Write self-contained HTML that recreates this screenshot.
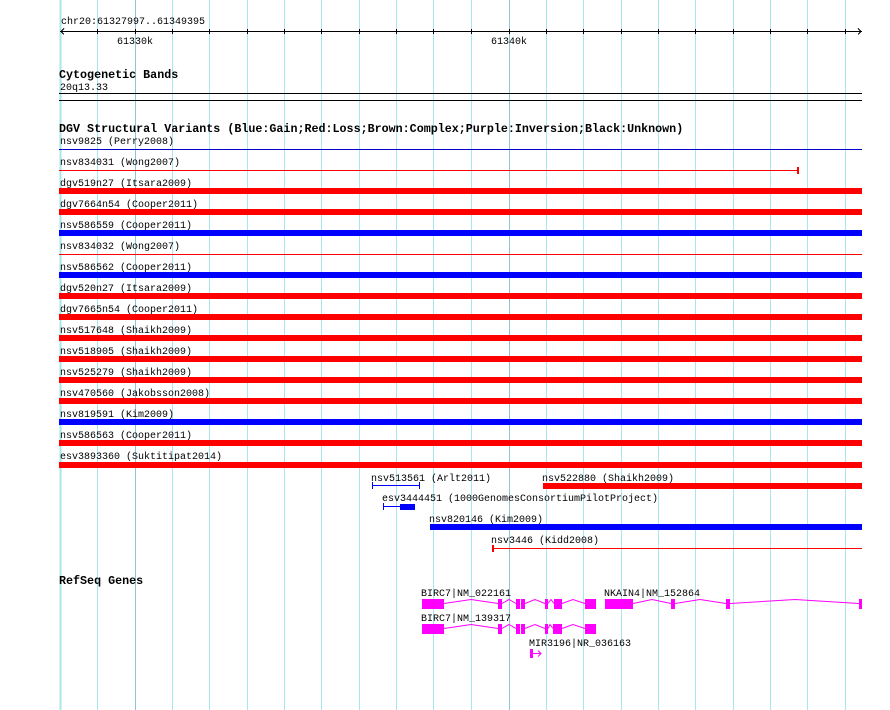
<!DOCTYPE html>
<html><head><meta charset="utf-8"><style>
html,body{margin:0;padding:0;background:#fff}
svg{display:block}
text{font-family:"Liberation Mono",monospace;font-size:10px;fill:#000}
.b{font-weight:bold;font-size:11.7px}
</style></head><body>
<svg width="890" height="710" viewBox="0 0 890 710" xmlns="http://www.w3.org/2000/svg" shape-rendering="crispEdges">
<g stroke="#a8e6ee" stroke-width="1">
<line x1="60.5" y1="0" x2="60.5" y2="710" stroke-width="2"/>
<line x1="97.5" y1="0" x2="97.5" y2="710"/>
<line x1="135.5" y1="0" x2="135.5" y2="710" stroke="#8cc4dc"/>
<line x1="172.5" y1="0" x2="172.5" y2="710"/>
<line x1="209.5" y1="0" x2="209.5" y2="710"/>
<line x1="247.5" y1="0" x2="247.5" y2="710"/>
<line x1="284.5" y1="0" x2="284.5" y2="710"/>
<line x1="321.5" y1="0" x2="321.5" y2="710"/>
<line x1="359.5" y1="0" x2="359.5" y2="710"/>
<line x1="396.5" y1="0" x2="396.5" y2="710"/>
<line x1="433.5" y1="0" x2="433.5" y2="710"/>
<line x1="471.5" y1="0" x2="471.5" y2="710"/>
<line x1="509.5" y1="0" x2="509.5" y2="710" stroke="#8cc4dc"/>
<line x1="546.5" y1="0" x2="546.5" y2="710"/>
<line x1="583.5" y1="0" x2="583.5" y2="710"/>
<line x1="621.5" y1="0" x2="621.5" y2="710"/>
<line x1="658.5" y1="0" x2="658.5" y2="710"/>
<line x1="695.5" y1="0" x2="695.5" y2="710"/>
<line x1="733.5" y1="0" x2="733.5" y2="710"/>
<line x1="770.5" y1="0" x2="770.5" y2="710"/>
<line x1="807.5" y1="0" x2="807.5" y2="710"/>
<line x1="845.5" y1="0" x2="845.5" y2="710"/>
</g>
<!-- ruler -->
<text x="61" y="24">chr20:61327997..61349395</text>
<g stroke="#000" stroke-width="1">
<line x1="60" y1="31.5" x2="862" y2="31.5"/>
<path d="M64 28.5 L61 31.5 L64 34.5 M858 28.5 L861 31.5 L858 34.5" fill="none"/>
<g>
<line x1="97.5" y1="29" x2="97.5" y2="34"/><line x1="135.5" y1="29" x2="135.5" y2="34"/><line x1="172.5" y1="29" x2="172.5" y2="34"/><line x1="209.5" y1="29" x2="209.5" y2="34"/><line x1="247.5" y1="29" x2="247.5" y2="34"/><line x1="284.5" y1="29" x2="284.5" y2="34"/><line x1="321.5" y1="29" x2="321.5" y2="34"/><line x1="359.5" y1="29" x2="359.5" y2="34"/><line x1="396.5" y1="29" x2="396.5" y2="34"/><line x1="433.5" y1="29" x2="433.5" y2="34"/><line x1="471.5" y1="29" x2="471.5" y2="34"/><line x1="509.5" y1="29" x2="509.5" y2="34"/><line x1="546.5" y1="29" x2="546.5" y2="34"/><line x1="583.5" y1="29" x2="583.5" y2="34"/><line x1="621.5" y1="29" x2="621.5" y2="34"/><line x1="658.5" y1="29" x2="658.5" y2="34"/><line x1="695.5" y1="29" x2="695.5" y2="34"/><line x1="733.5" y1="29" x2="733.5" y2="34"/><line x1="770.5" y1="29" x2="770.5" y2="34"/><line x1="807.5" y1="29" x2="807.5" y2="34"/><line x1="845.5" y1="29" x2="845.5" y2="34"/>
</g>
</g>
<text x="117" y="44">61330k</text>
<text x="491" y="44">61340k</text>
<!-- cytoband -->
<text class="b" x="59" y="78">Cytogenetic Bands</text>
<text x="60" y="90">20q13.33</text>
<rect x="59" y="93" width="803" height="1" fill="#000"/>
<rect x="59" y="100" width="803" height="1" fill="#000"/>
<!-- DGV -->
<text class="b" x="59" y="132">DGV Structural Variants (Blue:Gain;Red:Loss;Brown:Complex;Purple:Inversion;Black:Unknown)</text>
<text x="60" y="144">nsv9825 (Perry2008)</text>
<rect x="59" y="149" width="803" height="1" fill="#0000cc"/>
<text x="60" y="165">nsv834031 (Wong2007)</text>
<rect x="59" y="170" width="739" height="1" fill="#f00"/><rect x="797" y="167" width="2" height="7" fill="#f00"/>
<text x="60" y="186">dgv519n27 (Itsara2009)</text>
<rect x="59" y="188" width="803" height="6" fill="#f00"/>
<text x="60" y="207">dgv7664n54 (Cooper2011)</text>
<rect x="59" y="209" width="803" height="6" fill="#f00"/>
<text x="60" y="228">nsv586559 (Cooper2011)</text>
<rect x="59" y="230" width="803" height="6" fill="#0000ff"/>
<text x="60" y="249">nsv834032 (Wong2007)</text>
<rect x="59" y="254" width="803" height="1" fill="#f00"/>
<text x="60" y="270">nsv586562 (Cooper2011)</text>
<rect x="59" y="272" width="803" height="6" fill="#0000ff"/>
<text x="60" y="291">dgv520n27 (Itsara2009)</text>
<rect x="59" y="293" width="803" height="6" fill="#f00"/>
<text x="60" y="312">dgv7665n54 (Cooper2011)</text>
<rect x="59" y="314" width="803" height="6" fill="#f00"/>
<text x="60" y="333">nsv517648 (Shaikh2009)</text>
<rect x="59" y="335" width="803" height="6" fill="#f00"/>
<text x="60" y="354">nsv518905 (Shaikh2009)</text>
<rect x="59" y="356" width="803" height="6" fill="#f00"/>
<text x="60" y="375">nsv525279 (Shaikh2009)</text>
<rect x="59" y="377" width="803" height="6" fill="#f00"/>
<text x="60" y="396">nsv470560 (Jakobsson2008)</text>
<rect x="59" y="398" width="803" height="6" fill="#f00"/>
<text x="60" y="417">nsv819591 (Kim2009)</text>
<rect x="59" y="419" width="803" height="6" fill="#0000ff"/>
<text x="60" y="438">nsv586563 (Cooper2011)</text>
<rect x="59" y="440" width="803" height="6" fill="#f00"/>
<text x="60" y="459">esv3893360 (Suktitipat2014)</text>
<rect x="59" y="462" width="803" height="6" fill="#f00"/>
<text x="371" y="481">nsv513561 (Arlt2011)</text>
<rect x="372" y="485" width="48" height="1" fill="#0000ff"/><rect x="372" y="482" width="1" height="7" fill="#0000ff"/><rect x="419" y="482" width="1" height="7" fill="#0000ff"/>
<text x="542" y="481">nsv522880 (Shaikh2009)</text>
<rect x="543" y="483" width="319" height="6" fill="#f00"/>
<text x="382" y="501">esv3444451 (1000GenomesConsortiumPilotProject)</text>
<rect x="383" y="506" width="17" height="1" fill="#0000ff"/><rect x="383" y="503" width="1" height="7" fill="#0000ff"/><rect x="400" y="504" width="15" height="6" fill="#0000ff"/>
<text x="429" y="522">nsv820146 (Kim2009)</text>
<rect x="430" y="524" width="432" height="6" fill="#0000ff"/>
<text x="491" y="543">nsv3446 (Kidd2008)</text>
<rect x="492" y="548" width="370" height="1" fill="#f00"/><rect x="492" y="545" width="2" height="7" fill="#f00"/>
<!-- RefSeq -->
<text class="b" x="59" y="584">RefSeq Genes</text>
<text x="421" y="596">BIRC7|NM_022161</text>
<text x="604" y="596">NKAIN4|NM_152864</text>
<g fill="#ff00ff">
<rect x="422" y="599" width="22" height="10"/><rect x="498" y="599" width="4" height="10"/><rect x="516" y="599" width="4" height="10"/><rect x="521" y="599" width="4" height="10"/><rect x="545" y="599" width="3" height="10"/><rect x="554" y="599" width="8" height="10"/><rect x="585" y="599" width="11" height="10"/>
<rect x="605" y="599" width="28" height="10"/><rect x="671" y="599" width="4" height="10"/><rect x="726" y="599" width="4" height="10"/><rect x="859" y="599" width="3" height="10"/>
<rect x="422" y="624" width="22" height="10"/><rect x="498" y="624" width="4" height="10"/><rect x="516" y="624" width="4" height="10"/><rect x="521" y="624" width="4" height="10"/><rect x="545" y="624" width="3" height="10"/><rect x="553" y="624" width="9" height="10"/><rect x="585" y="624" width="11" height="10"/>
<rect x="530" y="649" width="3" height="9"/>
</g>
<g fill="none" stroke="#ff00ff" stroke-width="1" shape-rendering="auto">
<path d="M444 603.5 L471 599.5 L498 603.5 M502 603.5 L509 599.5 L516 603.5 M525 603.5 L535 599.5 L545 603.5 M548 603.5 L551 599.5 L554 603.5 M562 603.5 L573 599.5 L585 603.5"/>
<path d="M633 603.5 L652 599.5 L671 603.5 M675 603.5 L700 599.5 L726 603.5 M730 603.5 L795 599.5 L859 603.5"/>
<path d="M444 628.5 L471 624.5 L498 628.5 M502 628.5 L509 624.5 L516 628.5 M525 628.5 L535 624.5 L545 628.5 M548 628.5 L550 624.5 L553 628.5 M562 628.5 L573 624.5 L585 628.5"/>
<path d="M533 653.5 L541 653.5 M538 650.5 L541 653.5 L538 656.5"/>
</g>
<text x="529" y="646">MIR3196|NR_036163</text>
<text x="421" y="621">BIRC7|NM_139317</text>
</svg>
</body></html>
